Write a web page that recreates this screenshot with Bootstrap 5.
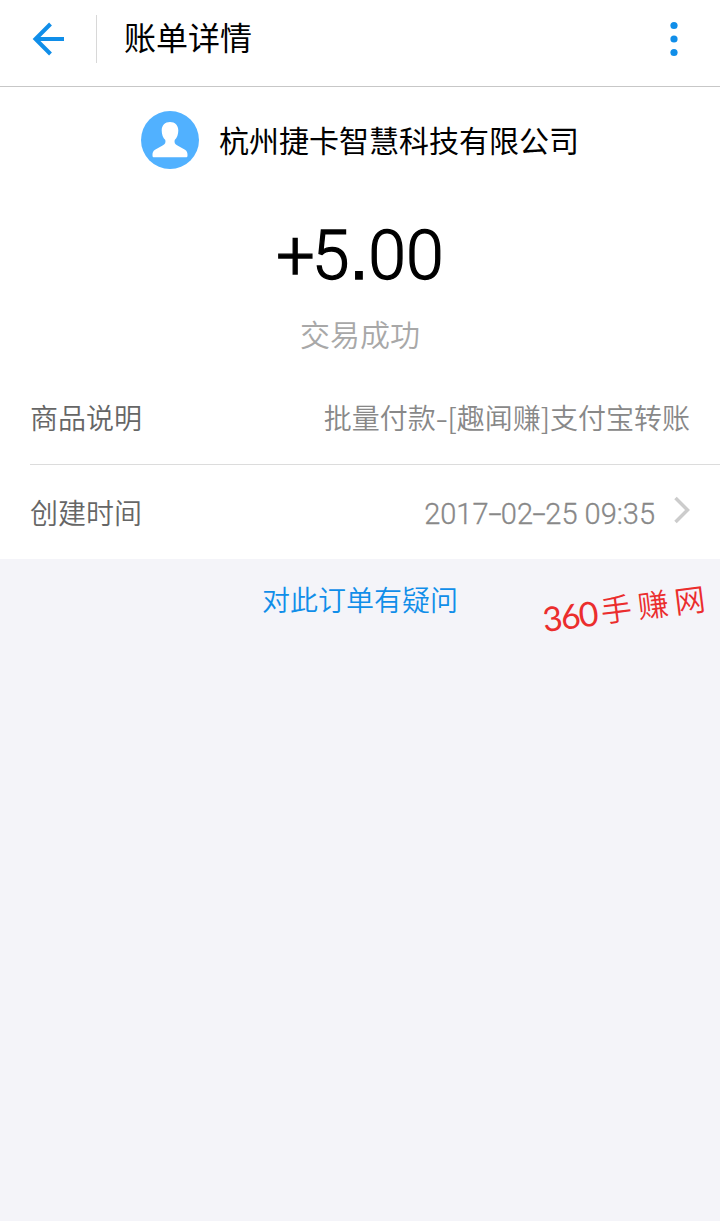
<!DOCTYPE html>
<html lang="zh-CN">
<head>
<meta charset="utf-8">
<meta name="viewport" content="width=device-width, initial-scale=1">
<title>账单详情</title>
<link href="https://cdn.jsdelivr.net/npm/bootstrap@5.3.0/dist/css/bootstrap.min.css" rel="stylesheet">
<style>
body{background:#f4f4f9;color:#000;font-family:"Noto Sans CJK SC",sans-serif;font-weight:350;min-height:100vh}
.topbar{height:87px;border-bottom:1px solid #c7c7c7;padding:0 30px 8px}
.split{width:1px;height:48px;background:#d8d8d8;margin-left:30px;margin-right:27px}
.title{font-size:32px;line-height:48px;font-weight:400;padding-bottom:7px}
.payee{height:58px;margin-top:24px;gap:20px;font-size:30px;font-weight:400}
.payee span{padding-bottom:2px}
.amount{font:300 68px/80px Roboto,sans-serif;height:80px;margin-top:47px;-webkit-text-stroke:1.300px #000}
.point{font-family:"Liberation Sans",sans-serif;line-height:1}
.five{margin-left:-3px}
.status{font-size:30px;line-height:44px;color:#a8a8a8;margin-top:15px}
.details{padding-top:14px}
.entry{font-size:28px;line-height:42px;height:95px;margin-left:30px;padding-right:30px}
.entry + .entry{border-top:1px solid #dcdcdc}
.entry dt{font-weight:350;color:#666}
.entry dd{color:#888}
.date{font:300 29px/42px Roboto,sans-serif;-webkit-text-stroke:.3px #888;padding-top:3px}
.dash{display:inline-block;transform:scaleX(1.3);margin:0 1px}
.date .dash{transform:scaleX(1.65);margin:0 2px}
.help{color:#108ee9;font-size:28px;line-height:42px;margin-top:19px}
.stamp{color:#eb2d2d;right:14px;top:24px;transform:rotate(-7deg);line-height:48px;font-size:31px;gap:6px}
.stamp b{font:400 34px/52px Lato,sans-serif;letter-spacing:-1.500px;margin-right:-2px}
</style>
<script src="https://cdn.jsdelivr.net/npm/bootstrap@5.3.0/dist/js/bootstrap.bundle.min.js"></script>
</head>
<body>
<div class="bg-white">
  <header class="topbar d-flex align-items-center">
    <svg width="36" height="36" viewBox="0 0 36 36" fill="none" stroke="#108ee9" stroke-width="4"><path d="M34 18H5.500M20.500 3 5.500 18l15 15"/></svg>
    <div class="split"></div>
    <h1 class="title m-0">账单详情</h1>
    <svg class="ms-auto" width="28" height="40" viewBox="0 0 28 40" fill="#108ee9"><circle cx="12" cy="6.500" r="3.600"/><circle cx="12" cy="20" r="3.600"/><circle cx="12" cy="33.500" r="3.600"/></svg>
  </header>
  <main>
    <div class="payee d-flex justify-content-center align-items-center">
      <svg width="58" height="58" viewBox="0 0 58 58"><circle cx="29" cy="29" r="29" fill="#51b1ff"/><path fill="#fff" d="M29 11c-5 0-8.300 3.200-8.300 8.500 0 4 1.300 7.300 3.600 9.500.5 2.600-.1 4.200-2.300 5.300l-8 4.400c-2 1.200-2.700 3.300-2.500 6 .1 1.100.6 1.500 1.700 1.500h31.600c1.100 0 1.600-.4 1.700-1.500.2-2.700-.5-4.800-2.500-6l-8-4.400c-2.200-1.100-2.800-2.700-2.300-5.300 2.300-2.200 3.600-5.500 3.600-9.500 0-5.300-3.300-8.500-8.300-8.500z"/></svg>
      <span>杭州捷卡智慧科技有限公司</span>
    </div>
    <div class="amount text-center">+<span class="five">5</span><span class="point">.</span>00</div>
    <div class="status text-center">交易成功</div>
    <dl class="details m-0">
      <div class="entry d-flex justify-content-between align-items-center"><dt>商品说明</dt><dd class="m-0">批量付款<span class="dash">-</span>[趣闻赚]支付宝转账</dd></div>
      <div class="entry d-flex justify-content-between align-items-center"><dt>创建时间</dt><dd class="m-0 d-flex align-items-center"><span class="date">2017<span class="dash">-</span>02<span class="dash">-</span>25 09:35</span><svg class="ms-3 mb-1" width="19" height="28" viewBox="0 0 19 28" fill="none" stroke="#ccc" stroke-width="3.500"><path d="m4.500 2 12 12-12 12"/></svg></dd></div>
    </dl>
  </main>
</div>
<footer class="position-relative text-center">
  <div class="help d-inline-block">对此订单有疑问</div>
  <div class="stamp position-absolute d-flex"><b>360</b><span>手</span><span>赚</span><span>网</span></div>
</footer>
</body>
</html>
